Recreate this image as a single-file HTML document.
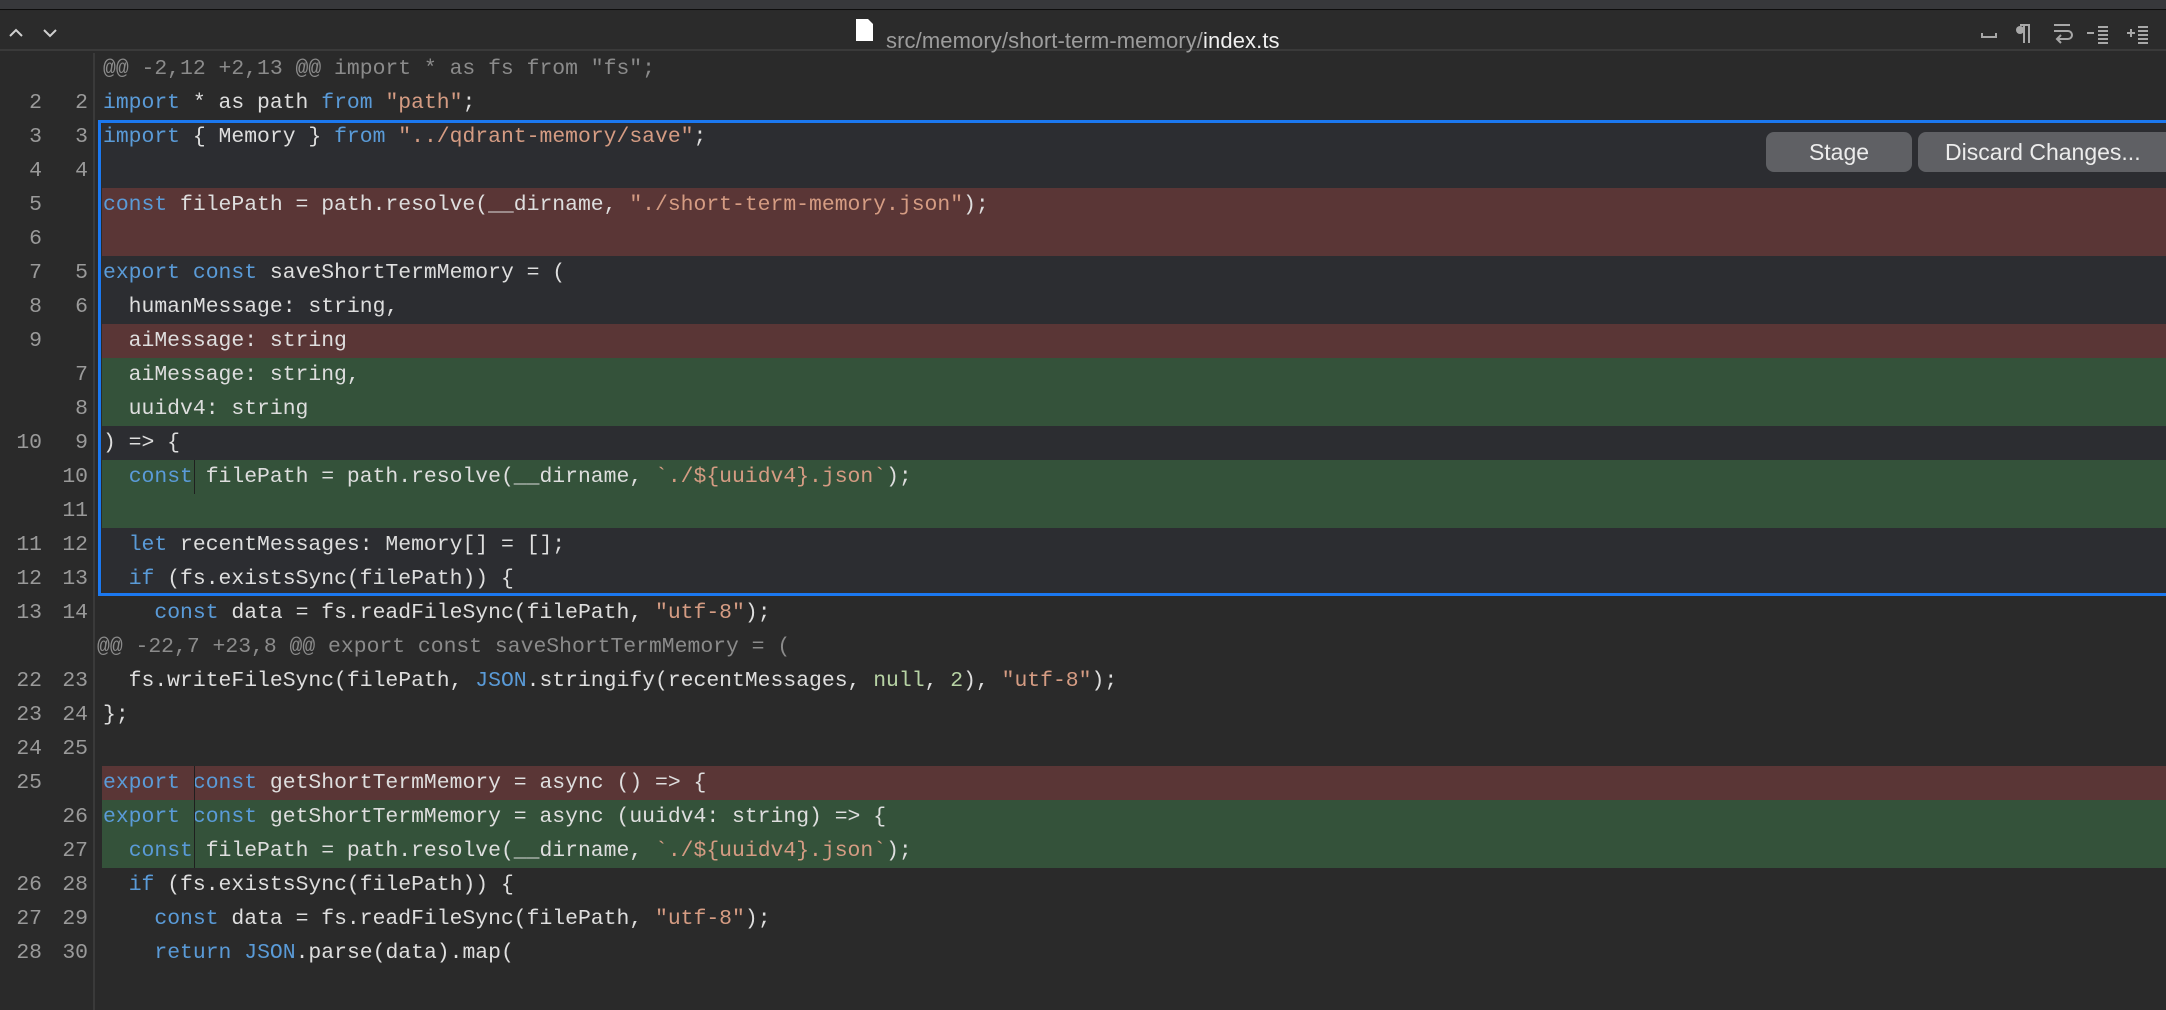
<!DOCTYPE html>
<html><head><meta charset="utf-8">
<style>
*{margin:0;padding:0;box-sizing:border-box}
html,body{width:2166px;height:1010px;overflow:hidden;background:#2a2a2a}
body{position:relative;font-family:"Liberation Mono",monospace}
#top{position:absolute;left:0;top:0;width:2166px;height:10px;background:#37383b;border-bottom:1px solid #0e0e0e}
#bar{position:absolute;left:0;top:11px;width:2166px;height:40px;background:#2b2b2b;border-bottom:2px solid #3a3a3a}
#title{position:absolute;left:886px;top:17px;font:22px "Liberation Sans",sans-serif;color:#9d9d9d;letter-spacing:0.1px}
#title b{font-weight:normal;color:#f0f0f0}
#gut{position:absolute;left:0;top:53px;width:95px;height:957px;background:#2a2a2a;border-right:2px solid #3a3a3a}
.r{position:absolute;left:0;width:2166px;height:34px;font-size:21.4px;line-height:34px;color:#dedede;white-space:pre}
.r .o,.r .nn{position:absolute;width:30px;text-align:right;color:#9a9a9a;top:0}
.r .o{left:12px}.r .nn{left:58px}
.r .c{position:absolute;left:102px;top:0;right:0;height:34px;padding-left:1px}
.del .c{background:#5a3636}
.add .c{background:#34523a}
.in .c{background:#2c2d31}
.k{color:#5a9bd8}.s{color:#d59c83}.n{color:#b7d3a4}.h{color:#8b8b8b}
.sep{position:absolute;left:92px;top:0;width:1px;height:34px;background:#1f1f1f}
#box{position:absolute;left:98px;top:120px;width:2070px;height:476px;border:3px solid #1b78f0;border-right:none;pointer-events:none}
.btn{position:absolute;top:132px;height:40px;background:#5f6064;border-radius:8px;color:#ececec;font:23px "Liberation Sans",sans-serif;line-height:40px;text-align:center}
</style></head><body>
<div id="top"></div>
<div id="bar">
<svg style="position:absolute;left:8px;top:13px" width="60" height="16" viewBox="0 0 60 16"><path d="M2 12 L8 6 L14 12" fill="none" stroke="#d0d0d0" stroke-width="2"/><path d="M36 6 L42 12 L48 6" fill="none" stroke="#d0d0d0" stroke-width="2"/></svg>
<svg style="position:absolute;left:855px;top:7px" width="20" height="24" viewBox="0 0 20 24"><path d="M1 1 H13 L18 6 V23 H1 Z" fill="#fff"/></svg>
<svg style="position:absolute;left:1980px;top:10px" width="186" height="24" viewBox="0 0 186 24" fill="none" stroke="#a8a8a8" stroke-width="2">
<path d="M2 12 V16 H16 V12"/>
<path d="M40 4 H50 M44 4 V22 M49 4 V22"/><circle cx="40" cy="9" r="4" fill="#a8a8a8" stroke="none"/>
<path d="M74 4 H90 M74 10 H88 A4 4 0 0 1 88 18 H78 M81 14 L77 18 L81 22"/>
<path d="M107 12 H114 M118 6 H128 M118 10 H128 M118 14 H128 M118 18 H128 M118 22 H128"/>
<path d="M147 12 H155 M151 8 V16 M158 6 H168 M158 10 H168 M158 14 H168 M158 18 H168 M158 22 H168"/>
</svg>
<div id="title">src/memory/short-term-memory/<b>index.ts</b></div>
</div>
<div id="gut"></div>

<div class="r" style="top:52px"><span class="c"><span class="h">@@ -2,12 +2,13 @@ import * as fs from "fs";</span></span></div>
<div class="r" style="top:86px"><span class="o">2</span><span class="nn">2</span><span class="c"><span class="k">import</span> * as path <span class="k">from</span> <span class="s">"path"</span>;</span></div>
<div class="r in" style="top:120px"><span class="o">3</span><span class="nn">3</span><span class="c"><span class="k">import</span> { Memory } <span class="k">from</span> <span class="s">"../qdrant-memory/save"</span>;</span></div>
<div class="r in" style="top:154px"><span class="o">4</span><span class="nn">4</span><span class="c"></span></div>
<div class="r del" style="top:188px"><span class="o">5</span><span class="c"><span class="k">const</span> filePath = path.resolve(__dirname, <span class="s">"./short-term-memory.json"</span>);</span></div>
<div class="r del" style="top:222px"><span class="o">6</span><span class="c"></span></div>
<div class="r in" style="top:256px"><span class="o">7</span><span class="nn">5</span><span class="c"><span class="k">export</span> <span class="k">const</span> saveShortTermMemory = (</span></div>
<div class="r in" style="top:290px"><span class="o">8</span><span class="nn">6</span><span class="c">  humanMessage: string,</span></div>
<div class="r del" style="top:324px"><span class="o">9</span><span class="c">  aiMessage: string</span></div>
<div class="r add" style="top:358px"><span class="nn">7</span><span class="c">  aiMessage: string,</span></div>
<div class="r add" style="top:392px"><span class="nn">8</span><span class="c">  uuidv4: string</span></div>
<div class="r in" style="top:426px"><span class="o">10</span><span class="nn">9</span><span class="c">) =&gt; {</span></div>
<div class="r add" style="top:460px"><span class="nn">10</span><span class="c">  <span class="k">const</span> filePath = path.resolve(__dirname, <span class="s">`./${uuidv4}.json`</span>);<span class="sep"></span></span></div>
<div class="r add" style="top:494px"><span class="nn">11</span><span class="c"></span></div>
<div class="r in" style="top:528px"><span class="o">11</span><span class="nn">12</span><span class="c">  <span class="k">let</span> recentMessages: Memory[] = [];</span></div>
<div class="r in" style="top:562px"><span class="o">12</span><span class="nn">13</span><span class="c">  <span class="k">if</span> (fs.existsSync(filePath)) {</span></div>
<div class="r" style="top:596px"><span class="o">13</span><span class="nn">14</span><span class="c">    <span class="k">const</span> data = fs.readFileSync(filePath, <span class="s">"utf-8"</span>);</span></div>
<div class="r" style="top:630px"><span class="c" style="left:96px"><span class="h">@@ -22,7 +23,8 @@ export const saveShortTermMemory = (</span></span></div>
<div class="r" style="top:664px"><span class="o">22</span><span class="nn">23</span><span class="c">  fs.writeFileSync(filePath, <span class="k">JSON</span>.stringify(recentMessages, <span class="n">null</span>, <span class="n">2</span>), <span class="s">"utf-8"</span>);</span></div>
<div class="r" style="top:698px"><span class="o">23</span><span class="nn">24</span><span class="c">};</span></div>
<div class="r" style="top:732px"><span class="o">24</span><span class="nn">25</span><span class="c"></span></div>
<div class="r del" style="top:766px"><span class="o">25</span><span class="c"><span class="k">export</span> <span class="k">const</span> getShortTermMemory = async () =&gt; {<span class="sep"></span></span></div>
<div class="r add" style="top:800px"><span class="nn">26</span><span class="c"><span class="k">export</span> <span class="k">const</span> getShortTermMemory = async (uuidv4: string) =&gt; {<span class="sep"></span></span></div>
<div class="r add" style="top:834px"><span class="nn">27</span><span class="c">  <span class="k">const</span> filePath = path.resolve(__dirname, <span class="s">`./${uuidv4}.json`</span>);<span class="sep"></span></span></div>
<div class="r" style="top:868px"><span class="o">26</span><span class="nn">28</span><span class="c">  <span class="k">if</span> (fs.existsSync(filePath)) {</span></div>
<div class="r" style="top:902px"><span class="o">27</span><span class="nn">29</span><span class="c">    <span class="k">const</span> data = fs.readFileSync(filePath, <span class="s">"utf-8"</span>);</span></div>
<div class="r" style="top:936px"><span class="o">28</span><span class="nn">30</span><span class="c">    <span class="k">return</span> <span class="k">JSON</span>.parse(data).map(</span></div>

<div id="box"></div>
<div class="btn" style="left:1766px;width:146px">Stage</div>
<div class="btn" style="left:1918px;width:260px;text-align:left;padding-left:27px">Discard Changes...</div>
</body></html>
